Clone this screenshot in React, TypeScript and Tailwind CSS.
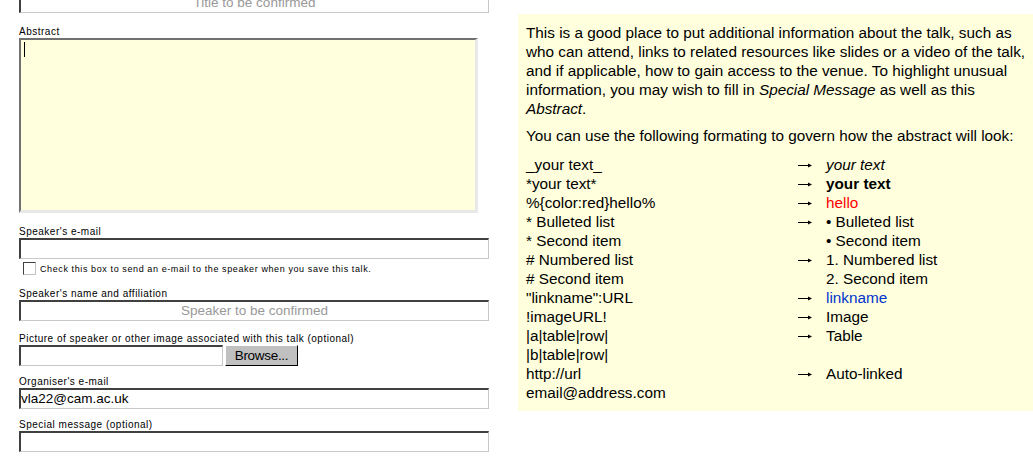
import React from 'react';

const label = 'block h-[12px] text-[10px] leading-[12px] tracking-[0.5px] text-black';
const inset =
  'block bg-white border-2 border-t-[#404040] border-l-[#404040] border-r-[#c8c8c8] border-b-[#c8c8c8] border-r-[1px] border-b-[1px]';

const ROWS: { src: string; arrow: boolean; out: React.ReactNode }[] = [
  { src: '_your text_', arrow: true, out: <i>your text</i> },
  { src: '*your text*', arrow: true, out: <b>your text</b> },
  { src: '%{color:red}hello%', arrow: true, out: <span className="text-[#ff0000]">hello</span> },
  { src: '* Bulleted list', arrow: true, out: '• Bulleted list' },
  { src: '* Second item', arrow: false, out: '• Second item' },
  { src: '# Numbered list', arrow: true, out: '1. Numbered list' },
  { src: '# Second item', arrow: false, out: '2. Second item' },
  { src: '"linkname":URL', arrow: true, out: <span className="text-[#0033cc]">linkname</span> },
  { src: '!imageURL!', arrow: true, out: 'Image' },
  { src: '|a|table|row|', arrow: true, out: 'Table' },
  { src: '|b|table|row|', arrow: false, out: '' },
  { src: 'http://url', arrow: true, out: 'Auto-linked' },
  { src: 'email@address.com', arrow: false, out: '' },
];

function Arrow() {
  return (
    <svg width="14" height="7" viewBox="0 0 14 7" className="mt-[1px]">
      <path d="M0 3.5 H11" stroke="black" strokeWidth="1" />
      <path d="M10 1.5 L14 3.5 L10 5.5 Z" fill="black" />
    </svg>
  );
}

export default function App() {
  return (
    <div className="w-[1033px] h-[462px] overflow-hidden bg-white flex [font-family:'Liberation_Sans',Arial,sans-serif]">
      <div className="w-[470px] ml-[19px] shrink-0 -mt-[8px]">
        <div className={`${inset} h-[21px] text-center text-[13.5px] leading-[17px] text-[#999]`}>Title to be confirmed</div>

        <div className={`${label} mt-[13px]`}>Abstract</div>
        <div className="w-[459px] h-[175px] bg-[#ffffdd] border-2 border-t-[#707070] border-l-[#707070] border-r-[#e8e8e8] border-b-[#e8e8e8] border-r-[3px] border-b-[3px] p-[2px]">
          <div className="w-[1px] h-[15px] bg-black ml-[1px]" />
        </div>

        <div className={`${label} mt-[13px]`}>Speaker's e-mail</div>
        <div className={`${inset} h-[21px]`} />
        <div className="flex items-center h-[13px] mt-[3px] ml-[4px]">
          <span className="w-[13px] h-[13px] bg-white border border-t-[#404040] border-l-[#404040] border-r-[#c0c0c0] border-b-[#c0c0c0]" />
          <span className="ml-[4px] text-[9px] leading-[12px] tracking-[0.6px]">Check this box to send an e-mail to the speaker when you save this talk.</span>
        </div>

        <div className={`${label} mt-[13px]`}>Speaker's name and affiliation</div>
        <div className={`${inset} h-[21px] text-center text-[13.5px] leading-[17px] text-[#999]`}>Speaker to be confirmed</div>

        <div className={`${label} mt-[12px]`}>Picture of speaker or other image associated with this talk (optional)</div>
        <div className="flex">
          <div className={`${inset} w-[204px] h-[21px]`} />
          <div className="ml-[2px] w-[73px] h-[21px] bg-[#c0c0c0] border border-t-white border-l-white border-r-black border-b-black text-[13.5px] leading-[19px] tracking-[-0.3px] text-black text-center">Browse...</div>
        </div>

        <div className={`${label} mt-[10px]`}>Organiser's e-mail</div>
        <div className={`${inset} h-[21px] text-[13.5px] leading-[18px] text-black`}>vla22@cam.ac.uk</div>

        <div className={`${label} mt-[10px]`}>Special message (optional)</div>
        <div className={`${inset} h-[21px]`} />
      </div>

      <div className="ml-[29px] mt-[14px] h-[397px] flex-1 bg-[#ffffdd] pl-[8px] pr-[3px] pt-[9px] text-[15.3px] leading-[19px] text-black">
        <p>
          This is a good place to put additional information about the talk, such as who can attend, links to related
          resources like slides or a video of the talk, and if applicable, how to gain access to the venue. To highlight
          unusual information, you may wish to fill in <i>Special Message</i> as well as this <i>Abstract</i>.
        </p>
        <p className="mt-[8px]">You can use the following formating to govern how the abstract will look:</p>
        <div className="mt-[10px]">
          {ROWS.map((r, i) => (
            <div key={i} className="flex items-center h-[19px]">
              <span className="w-[272px] shrink-0">{r.src}</span>
              <span className="w-[28px] shrink-0 flex items-center">{r.arrow && <Arrow />}</span>
              <span>{r.out}</span>
            </div>
          ))}
        </div>
      </div>
    </div>
  );
}
